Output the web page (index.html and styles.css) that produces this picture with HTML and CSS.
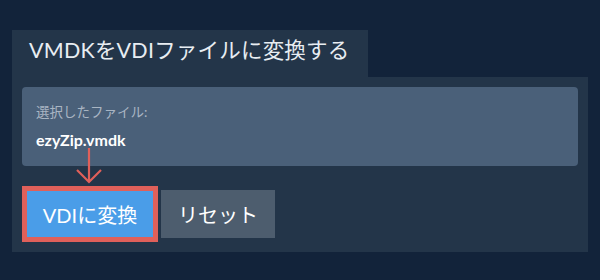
FILE: index.html
```html
<!DOCTYPE html>
<html lang="ja">
<head>
<meta charset="utf-8">
<link rel="stylesheet" href="styles.css">
</head>
<body>
<div class="wrap">
  <div class="tab">VMDKをVDIファイルに変換する</div>
  <div class="panel">
    <div class="filebox">
      <div class="label">選択したファイル:</div>
      <div class="fname">ezyZip.vmdk</div>
    </div>
    <div class="actions">
      <button class="btn convert">VDIに変換</button>
      <button class="btn reset">リセット</button>
    </div>
    <svg class="arrow" width="30" height="38" viewBox="0 0 30 38">
      <path d="M15 0 V34 M3 22 L15 34 L27 22" fill="none" stroke="#e0605a" stroke-width="2.2"/>
    </svg>
  </div>
</div>
</body>
</html>
```
FILE: styles.css
```css
html, body {
  margin: 0;
  padding: 0;
  background: #12233a;
  font-family: "Lato", "Noto Sans CJK JP", sans-serif;
}
.wrap {
  padding: 30px 12px 0 12px;
  width: 576px;
}
.tab {
  width: 339px;
  height: 47px;
  padding-left: 17px;
  background: #233549;
  color: #e8edf2;
  font-size: 21.5px;
  line-height: 40px;
  letter-spacing: 0.2px;
}
.panel {
  position: relative;
  background: #233549;
  padding: 10px;
  height: 155px;
}
.filebox {
  background: #4a6079;
  border-radius: 4px;
  height: 79px;
  padding: 16px 14px 0 14px;
  box-sizing: border-box;
}
.label {
  color: #a9b5c3;
  font-size: 13.5px;
  line-height: 18px;
}
.fname {
  color: #ffffff;
  font-weight: bold;
  font-size: 16px;
  line-height: 20px;
  margin-top: 9px;
}
.actions {
  display: flex;
  align-items: center;
  gap: 3px;
  margin-top: 20px;
}
.btn {
  border: none;
  color: #ffffff;
  font-family: "Lato", "Noto Sans CJK JP", sans-serif;
  font-size: 20px;
  padding: 0;
  margin: 0;
}
.convert {
  background: #4a9de8;
  border: 5px solid #e0605a;
  width: 136px;
  height: 56px;
}
.reset {
  background: #4d5d6e;
  width: 114px;
  height: 48px;
}
.arrow {
  position: absolute;
  left: 62px;
  top: 71px;
}
```
